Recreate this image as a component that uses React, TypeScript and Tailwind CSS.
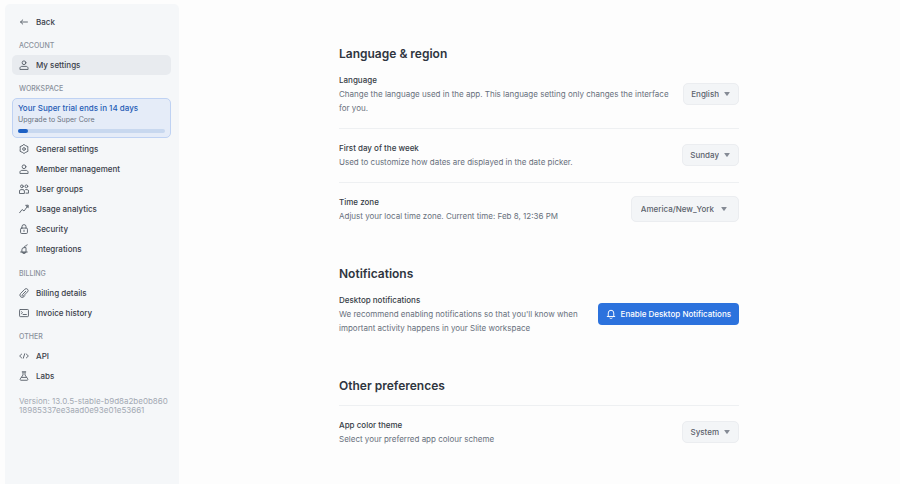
import React from 'react'

type IconName =
  | 'back'
  | 'user'
  | 'gear'
  | 'users'
  | 'trend'
  | 'lock'
  | 'plug'
  | 'clip'
  | 'invoice'
  | 'code'
  | 'flask'
  | 'bell'

const ICONS: Record<IconName, React.ReactNode> = {
  back: <path d="M13.5 8H2.5M6 4.6L2.5 8 6 11.4" />,
  user: (
    <>
      <circle cx="8" cy="4.4" r="3" />
      <path d="M1.5 14.5v-1.2c0-1.8 1.4-3.1 3.1-3.1h6.8c1.7 0 3.1 1.3 3.1 3.1v1.2z" />
    </>
  ),
  gear: (
    <>
      <path d="M8 .8l2 1.5 4.3 1.9-.3 2.6.3 4.9-4.3 2L8 15.2l-2-1.5-4.3-2L2 6.8l-.3-2.6L6 2.3z" />
      <circle cx="8" cy="8" r="2.2" />
    </>
  ),
  users: (
    <>
      <circle cx="4.6" cy="3.7" r="2.2" />
      <circle cx="11.8" cy="3.7" r="2.2" />
      <path d="M.8 14.6v-3.4c0-1.3.9-2.2 2.1-2.2h3.6c1.2 0 2.1.9 2.1 2.2v3.4zM10.6 9h2.6c1.2 0 2.1.9 2.1 2.2v3.4h-4.1" />
    </>
  ),
  trend: <path d="M1 14l4-5.2 3 2.4 6-8M11.2 2.2l3.4-.4.2 3.4z" />,
  lock: (
    <>
      <rect x="2.5" y="6.5" width="11" height="8.7" rx="1.8" />
      <path d="M4.8 6.5V4.2a3.2 3.2 0 016.4 0v2.3M8 9.8v2.2" />
    </>
  ),
  plug: (
    <path d="M4.6 12.8V9.4a3.6 3.6 0 013.6-3.6h3v7zM2.6 12.8h10.6M6.6 15h2.8M8.2 5.8c0-2.4 1.4-2.6 3-2.8 1.2-.2 1.6-.8 1.8-1.8" />
  ),
  clip: (
    <path d="M10.8 5.2l-5.5 5.6a1.3 1.3 0 001.9 1.9l6.4-6.5a3 3 0 00-4.2-4.3L2.6 8.7a3.7 3.7 0 005.2 5.3l1.4-1.4" />
  ),
  invoice: (
    <>
      <rect x=".9" y="2.4" width="14.2" height="11.4" rx="1.2" />
      <path d="M4 6l1.6 1.5L4 9M6.6 10.4h5.2" />
    </>
  ),
  code: <path d="M4.2 5L1 8l3.2 3M11.8 5L15 8l-3.2 3M9.2 4.4L6.8 11.6" />,
  flask: (
    <path d="M5.2 1.4h5.6M6.4 1.4v5L2 12.6c-.7 1 0 2.2 1.2 2.2h9.6c1.2 0 1.9-1.2 1.2-2.2L9.6 6.4v-5M4.2 10.2h7.6" />
  ),
  bell: <path d="M3.6 12V6.4a4.4 4.4 0 018.8 0V12M2 12h12M6.2 14.6c1 .8 2.6.8 3.6 0" />,
}

function Icon({ name, className = 'size-[10px] text-[#5b626c]' }: { name: IconName; className?: string }) {
  return (
    <svg
      viewBox="0 0 16 16"
      fill="none"
      stroke="currentColor"
      strokeWidth="1.5"
      strokeLinecap="round"
      strokeLinejoin="round"
      className={`shrink-0 ${className}`}
      aria-hidden="true"
    >
      {ICONS[name]}
    </svg>
  )
}

function NavItem({ icon, label, active }: { icon: IconName; label: string; active?: boolean }) {
  return (
    <a
      href="#"
      aria-current={active ? 'page' : undefined}
      className={`flex h-5 items-center gap-[7px] rounded-[5px] px-[7px] text-[8px] font-medium text-[#3a404a] ${
        active ? 'bg-[#e8ebef]' : ''
      }`}
    >
      <Icon name={icon} />
      {label}
    </a>
  )
}

function NavSection({ title, children }: { title: string; children: React.ReactNode }) {
  return (
    <section className="mt-[9px]">
      <h2 className="mb-1 px-[7px] text-[7px] leading-[10px] font-medium text-[#8a919c] uppercase">
        {title}
      </h2>
      {children}
    </section>
  )
}

function TrialCard() {
  return (
    <a href="#" className="block rounded-[5px] border border-[#bfd2f3] bg-[#e5ecf8] px-[5px] pt-[3px] pb-1">
      <p className="text-[8px] leading-[12px] font-medium text-[#1f5bb5]">Your Super trial ends in 14 days</p>
      <p className="text-[7px] leading-[11px] text-[#6b7482]">Upgrade to Super Core</p>
      <div className="mt-1 h-1 rounded-full bg-[#c8d8ef]">
        <div className="h-full w-[7%] rounded-full bg-[#1d60c4]" />
      </div>
    </a>
  )
}

function Sidebar() {
  return (
    <nav className="mt-1 ml-[5px] w-[174px] shrink-0 rounded-t-[5px] bg-[#f5f7f9] pt-2 pr-2 pl-[7px]">
      <NavItem icon="back" label="Back" />
      <NavSection title="Account">
        <NavItem icon="user" label="My settings" active />
      </NavSection>
      <NavSection title="Workspace">
        <TrialCard />
        <div className="py-px">
          <NavItem icon="gear" label="General settings" />
          <NavItem icon="user" label="Member management" />
          <NavItem icon="users" label="User groups" />
          <NavItem icon="trend" label="Usage analytics" />
          <NavItem icon="lock" label="Security" />
          <NavItem icon="plug" label="Integrations" />
        </div>
      </NavSection>
      <NavSection title="Billing">
        <NavItem icon="clip" label="Billing details" />
        <NavItem icon="invoice" label="Invoice history" />
      </NavSection>
      <NavSection title="Other">
        <NavItem icon="code" label="API" />
        <NavItem icon="flask" label="Labs" />
      </NavSection>
      <p className="mt-[11px] px-[7px] text-[8px] leading-[9px] whitespace-nowrap text-[#a3a9b3]">
        Version: 13.0.5-stable-b9d8a2be0b860
        <br />
        18985337ee3aad0e93e01e53661
      </p>
    </nav>
  )
}

function SelectBox({ id, options, large }: { id: string; options: string[]; large?: boolean }) {
  return (
    <div className="grid shrink-0 items-center">
      <select
        id={id}
        className={`field-sizing-content col-start-1 row-start-1 appearance-none rounded-[5px] border border-[#ebedf0] bg-[#f3f5f7] text-[8px] font-medium text-[#5b626c] ${
          large ? 'h-[26px] pr-6 pl-[9px]' : 'h-[22px] pr-[19px] pl-[7px]'
        }`}
      >
        {options.map((option) => (
          <option key={option}>{option}</option>
        ))}
      </select>
      <svg
        viewBox="0 0 6 4"
        className={`pointer-events-none col-start-1 row-start-1 h-1 w-1.5 justify-self-end fill-[#858b95] ${
          large ? 'mr-3' : 'mr-[9px]'
        }`}
        aria-hidden="true"
      >
        <path d="M.7 0h4.6q.7 0 .3.6L3.5 3.6q-.5.6-1 0L.4.6Q0 0 .7 0z" />
      </svg>
    </div>
  )
}

type SettingProps = { id: string; label: string; text: string; children: React.ReactNode }

function Setting({ id, label, text, children }: SettingProps) {
  return (
    <div className="flex items-center justify-between gap-3 pt-3 pb-[13px]">
      <div className="text-[8px] leading-[14px]">
        <label htmlFor={id} className="block font-medium text-[#363c46]">
          {label}
        </label>
        <p className="text-[#68707c]">{text}</p>
      </div>
      {children}
    </div>
  )
}

function Heading({ children }: { children: React.ReactNode }) {
  return <h1 className="text-[12px] leading-[14px] font-semibold text-[#2f3540]">{children}</h1>
}

export default function App() {
  return (
    <div className="flex min-h-screen bg-[#fdfdfd] font-['Inter','Liberation_Sans',sans-serif]">
      <Sidebar />
      <main className="flex flex-1 justify-center pt-[47px] pr-[25px] pl-6">
        <div className="w-full max-w-[400px] space-y-[31px]">
          <section>
            <Heading>Language &amp; region</Heading>
            <div className="divide-y divide-[#eef0f2]">
              <Setting
                id="language"
                label="Language"
                text="Change the language used in the app. This language setting only changes the interface for you."
              >
                <SelectBox id="language" options={['English', 'French', 'German']} />
              </Setting>
              <Setting
                id="first-day"
                label="First day of the week"
                text="Used to customize how dates are displayed in the date picker."
              >
                <SelectBox id="first-day" options={['Sunday', 'Monday']} />
              </Setting>
              <Setting
                id="time-zone"
                label="Time zone"
                text="Adjust your local time zone. Current time: Feb 8, 12:36 PM"
              >
                <SelectBox id="time-zone" large options={['America/New_York', 'Europe/Paris']} />
              </Setting>
            </div>
          </section>
          <section>
            <Heading>Notifications</Heading>
            <Setting
              id="desktop-notifications"
              label="Desktop notifications"
              text="We recommend enabling notifications so that you'll know when important activity happens in your Slite workspace"
            >
              <button
                id="desktop-notifications"
                type="button"
                className="flex h-[22px] shrink-0 items-center gap-[5px] rounded-[4px] bg-[#2c72dd] px-2 text-[8px] font-medium text-white"
              >
                <Icon name="bell" className="size-[10px]" />
                Enable Desktop Notifications
              </button>
            </Setting>
          </section>
          <section>
            <Heading>Other preferences</Heading>
            <div className="mt-3 border-t border-[#eef0f2]">
              <Setting id="theme" label="App color theme" text="Select your preferred app colour scheme">
                <SelectBox id="theme" options={['System', 'Light', 'Dark']} />
              </Setting>
            </div>
          </section>
        </div>
      </main>
    </div>
  )
}
